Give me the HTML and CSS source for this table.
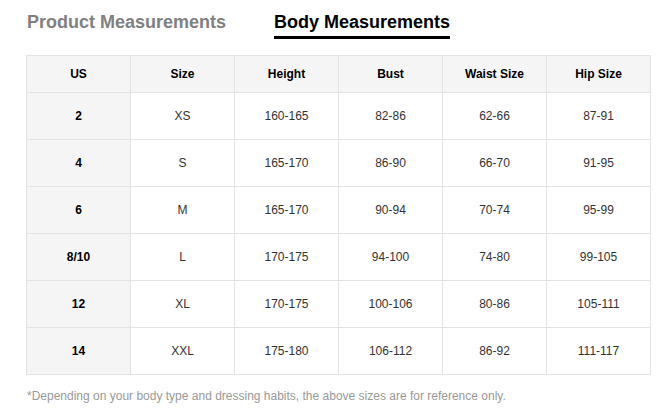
FILE: index.html
```html
<!DOCTYPE html>
<html>
<head>
<meta charset="utf-8">
<link rel="stylesheet" href="styles.css">
</head>
<body>
<div class="wrap">
  <div class="tabs">
    <div class="tab">Product Measurements</div>
    <div class="tab active">Body Measurements</div>
  </div>
  <table class="sizes">
    <thead>
      <tr><th>US</th><th>Size</th><th>Height</th><th>Bust</th><th>Waist Size</th><th>Hip Size</th></tr>
    </thead>
    <tbody>
      <tr><th>2</th><td>XS</td><td>160-165</td><td>82-86</td><td>62-66</td><td>87-91</td></tr>
      <tr><th>4</th><td>S</td><td>165-170</td><td>86-90</td><td>66-70</td><td>91-95</td></tr>
      <tr><th>6</th><td>M</td><td>165-170</td><td>90-94</td><td>70-74</td><td>95-99</td></tr>
      <tr><th>8/10</th><td>L</td><td>170-175</td><td>94-100</td><td>74-80</td><td>99-105</td></tr>
      <tr><th>12</th><td>XL</td><td>170-175</td><td>100-106</td><td>80-86</td><td>105-111</td></tr>
      <tr><th>14</th><td>XXL</td><td>175-180</td><td>106-112</td><td>86-92</td><td>111-117</td></tr>
    </tbody>
  </table>
  <p class="note">*Depending on your body type and dressing habits, the above sizes are for reference only.</p>
</div>
</body>
</html>
```
FILE: styles.css
```css
html, body { margin: 0; padding: 0; background: #fff; }
body { font-family: "Liberation Sans", Arial, sans-serif; color: #333; }
.wrap { padding: 11px 17px 0 27px; }
.tabs { display: flex; gap: 48px; height: 28px; }
.tab { font-size: 18px; font-weight: bold; color: #808080; line-height: 22px; height: 28px; box-sizing: border-box; }
.tab.active { color: #000; border-bottom: 3px solid #000; }
.sizes { margin: 16px 0 0 -1px; width: 625px; border-collapse: collapse; table-layout: fixed; font-size: 12px; }
.sizes th, .sizes td { border: 1px solid #e3e3e3; text-align: center; padding: 0; }
.sizes thead th { background: #f5f5f5; height: 36px; color: #000; font-weight: bold; }
.sizes tbody th { background: #f5f5f5; color: #000; font-weight: bold; }
.sizes tbody td, .sizes tbody th { height: 46px; }
.sizes tbody td { color: #333; }
.note { margin: 14px 0 0; font-size: 12px; color: #999; }
```
